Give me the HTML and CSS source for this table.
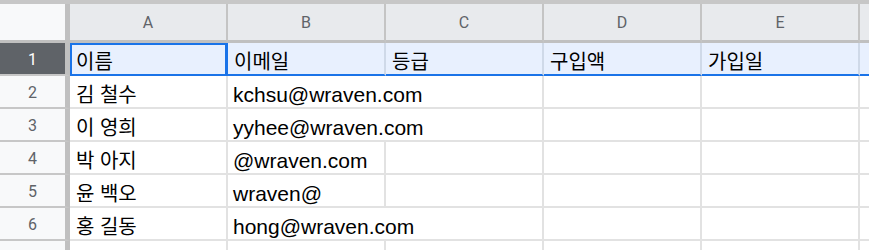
FILE: index.html
```html
<!DOCTYPE html>
<html lang="ko">
<head>
    <meta charset="UTF-8">
    <title>회원 목록</title>
    <link rel="stylesheet" href="styles.css">
</head>
<body>
    <div class="sheet">
        <!-- 열 머리글 -->
        <div class="corner"></div>
        <div class="col-head">A</div>
        <div class="col-head">B</div>
        <div class="col-head">C</div>
        <div class="col-head">D</div>
        <div class="col-head">E</div>
        <div class="col-head"></div>

        <!-- 1행: 선택된 행 -->
        <div class="row-head active">1</div>
        <div class="cell sel ko cursor">이름</div>
        <div class="cell sel ko">이메일</div>
        <div class="cell sel ko">등급</div>
        <div class="cell sel ko">구입액</div>
        <div class="cell sel ko">가입일</div>
        <div class="cell sel"></div>

        <div class="row-head">2</div>
        <div class="cell ko">김 철수</div>
        <div class="cell wide">kchsu@wraven.com</div>
        <div class="cell"></div>
        <div class="cell"></div>
        <div class="cell"></div>

        <div class="row-head">3</div>
        <div class="cell ko">이 영희</div>
        <div class="cell wide">yyhee@wraven.com</div>
        <div class="cell"></div>
        <div class="cell"></div>
        <div class="cell"></div>

        <div class="row-head">4</div>
        <div class="cell ko">박 아지</div>
        <div class="cell">@wraven.com</div>
        <div class="cell"></div>
        <div class="cell"></div>
        <div class="cell"></div>
        <div class="cell"></div>

        <div class="row-head">5</div>
        <div class="cell ko">윤 백오</div>
        <div class="cell">wraven@</div>
        <div class="cell"></div>
        <div class="cell"></div>
        <div class="cell"></div>
        <div class="cell"></div>

        <div class="row-head">6</div>
        <div class="cell ko">홍 길동</div>
        <div class="cell wide">hong@wraven.com</div>
        <div class="cell"></div>
        <div class="cell"></div>
        <div class="cell"></div>

        <!-- 화면 아래로 잘리는 빈 행 -->
        <div class="row-head"></div>
        <div class="cell"></div>
        <div class="cell"></div>
        <div class="cell"></div>
        <div class="cell"></div>
        <div class="cell"></div>
        <div class="cell"></div>
    </div>
</body>
</html>
```

FILE: styles.css
```css
* {
    margin: 0;
    padding: 0;
    box-sizing: border-box;
}
body {
    background: #fff;
    overflow: hidden;
    font-family: "Liberation Sans", Arial, "Noto Sans CJK KR", sans-serif;
    color: #000;
}
.sheet {
    display: grid;
    grid-template-columns: 70px repeat(5, 158px) 1fr;
    grid-template-rows: 39px repeat(7, 33px);
    border-top: 4px solid #c7c7c7;
}
.corner {
    background: #f8f9fa;
    border-right: 5px solid #c0c0c0;
    border-bottom: 3px solid #c0c0c0;
}
.col-head {
    background: #e8eaed;
    border-right: 2px solid #c4c4c4;
    border-bottom: 3px solid #c0c0c0;
    display: flex;
    align-items: center;
    justify-content: center;
    font-family: Roboto, "Liberation Sans", sans-serif;
    font-size: 16px;
    color: #5f6368;
}
.row-head {
    background: #f8f9fa;
    border-right: 5px solid #c0c0c0;
    border-bottom: 2px solid #c7c7c7;
    display: flex;
    align-items: center;
    justify-content: center;
    font-family: Roboto, "Liberation Sans", sans-serif;
    font-size: 16px;
    color: #5f6368;
    padding-top: 2px;
}
.row-head.active {
    background: #5f6368;
    color: #fff;
}
.cell {
    border-right: 2px solid #e2e2e2;
    border-bottom: 2px solid #e2e2e2;
    display: flex;
    align-items: flex-end;
    padding: 0 5px;
    font-size: 21px;
    line-height: 24px;
    white-space: nowrap;
}
.cell.ko {
    font-size: 20px;
    padding-left: 6px;
}
/* 이메일이 옆 칸까지 넘치는 경우 */
.cell.wide {
    grid-column: span 2;
}
.cell.sel {
    background: #e8f0fe;
    border-right-color: #cfd9e8;
    border-bottom-color: #1a73e8;
}
.cell.cursor {
    position: relative;
}
.cell.cursor::after {
    content: "";
    position: absolute;
    inset: 0 -2px -2px 0;
    border: 2px solid #1a73e8;
    border-right-width: 3px;
}
```
